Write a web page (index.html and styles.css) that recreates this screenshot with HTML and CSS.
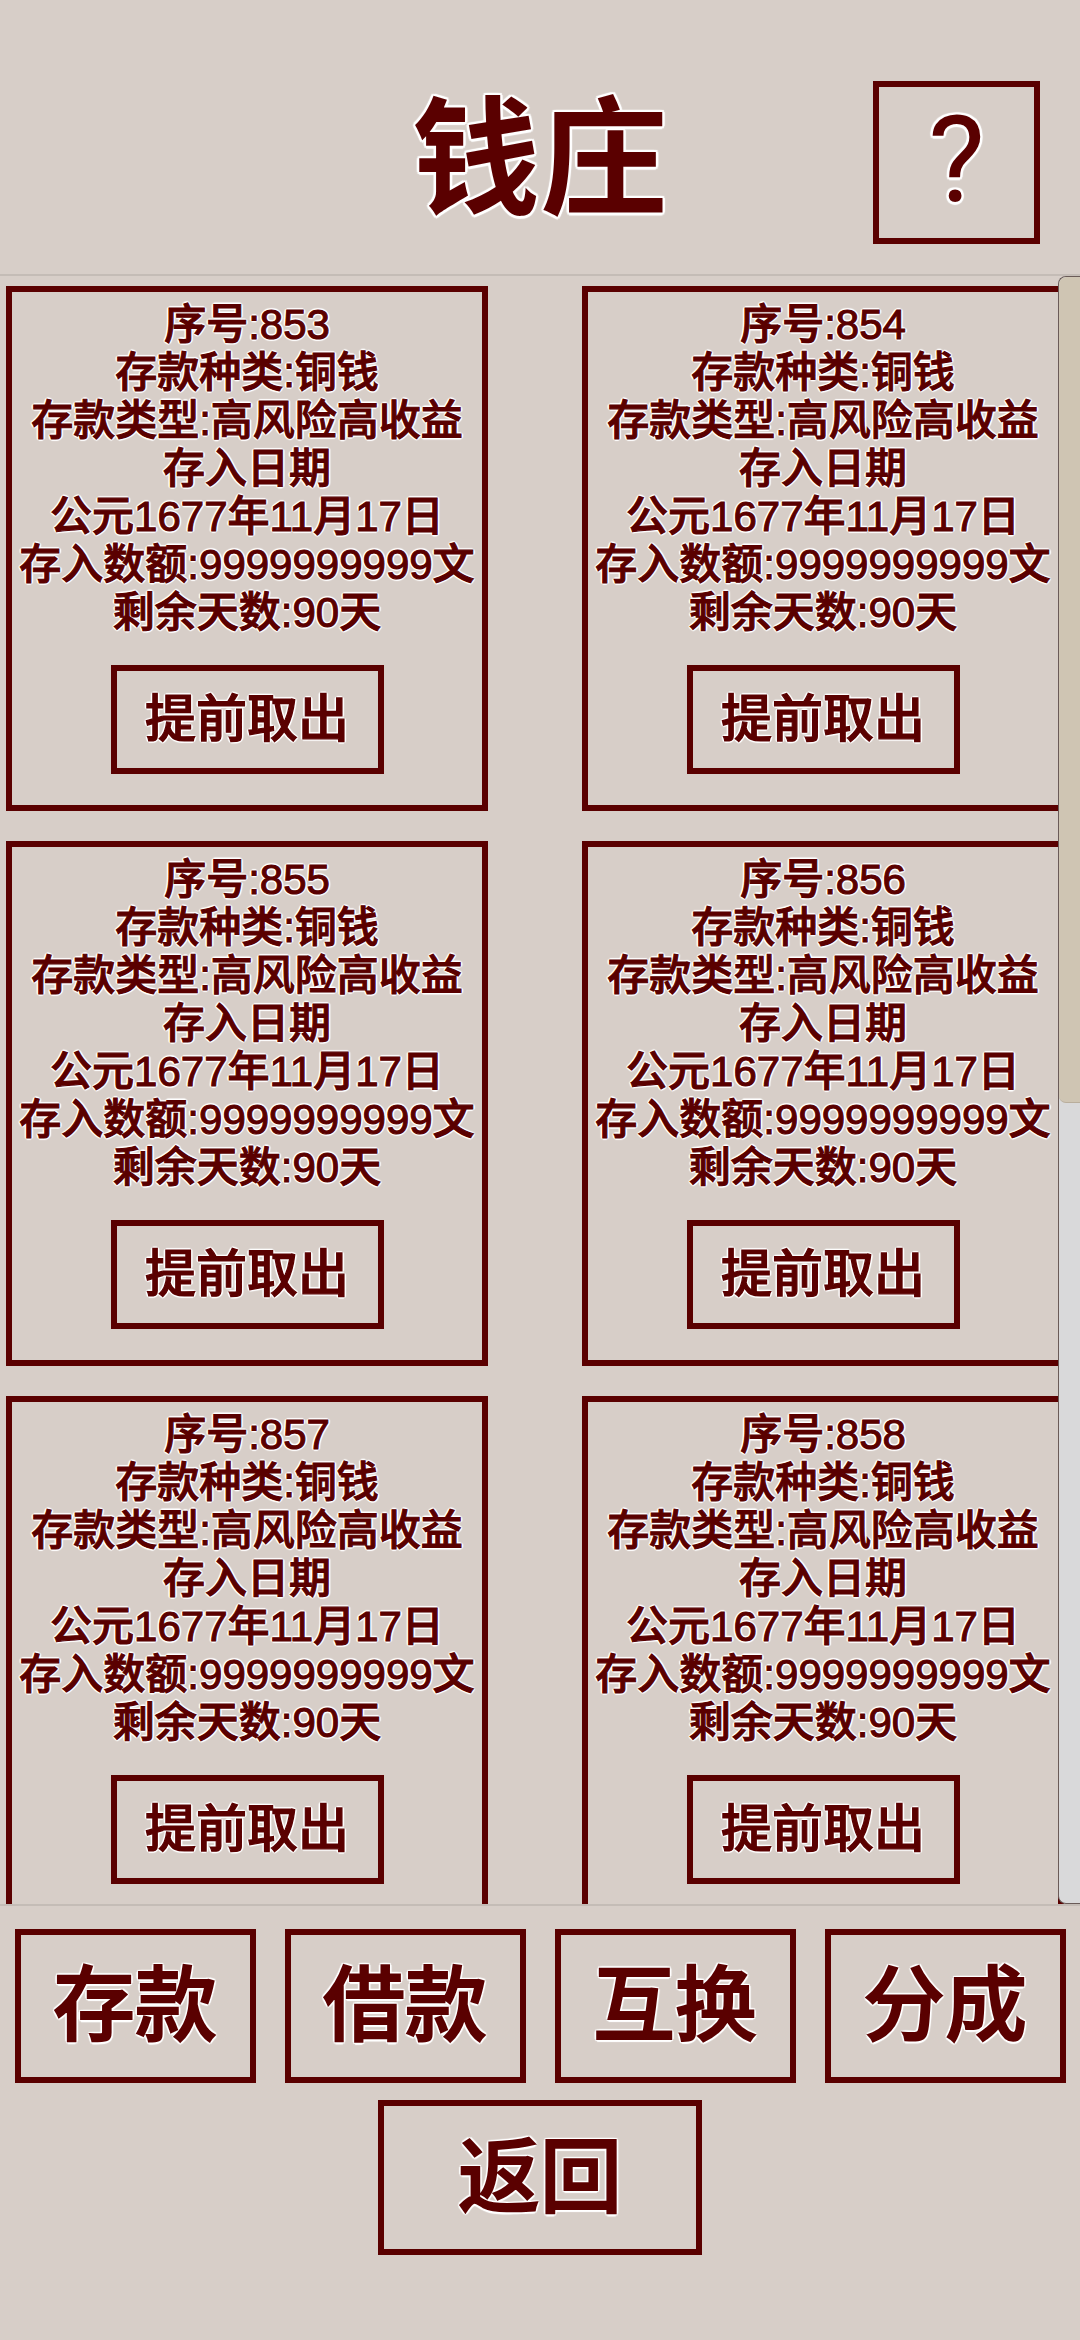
FILE: index.html
```html
<!DOCTYPE html>
<html lang="zh-CN">
<head>
<meta charset="utf-8">
<title>钱庄</title>
<link rel="stylesheet" href="styles.css">
</head>
<body>
<div class="app">
  <header class="top">
    <div class="top-side"></div>
    <h1 class="title">钱庄</h1>
    <div class="top-side top-right">
      <button class="help">?</button>
    </div>
  </header>

  <section class="list">
    <div class="grid">
      <div class="card">
        <div class="line">序号:853</div>
        <div class="line">存款种类:铜钱</div>
        <div class="line">存款类型:高风险高收益</div>
        <div class="line">存入日期</div>
        <div class="line">公元1677年11月17日</div>
        <div class="line">存入数额:9999999999文</div>
        <div class="line">剩余天数:90天</div>
        <button class="card-btn">提前取出</button>
      </div>
      <div class="card">
        <div class="line">序号:854</div>
        <div class="line">存款种类:铜钱</div>
        <div class="line">存款类型:高风险高收益</div>
        <div class="line">存入日期</div>
        <div class="line">公元1677年11月17日</div>
        <div class="line">存入数额:9999999999文</div>
        <div class="line">剩余天数:90天</div>
        <button class="card-btn">提前取出</button>
      </div>
      <div class="card">
        <div class="line">序号:855</div>
        <div class="line">存款种类:铜钱</div>
        <div class="line">存款类型:高风险高收益</div>
        <div class="line">存入日期</div>
        <div class="line">公元1677年11月17日</div>
        <div class="line">存入数额:9999999999文</div>
        <div class="line">剩余天数:90天</div>
        <button class="card-btn">提前取出</button>
      </div>
      <div class="card">
        <div class="line">序号:856</div>
        <div class="line">存款种类:铜钱</div>
        <div class="line">存款类型:高风险高收益</div>
        <div class="line">存入日期</div>
        <div class="line">公元1677年11月17日</div>
        <div class="line">存入数额:9999999999文</div>
        <div class="line">剩余天数:90天</div>
        <button class="card-btn">提前取出</button>
      </div>
      <div class="card">
        <div class="line">序号:857</div>
        <div class="line">存款种类:铜钱</div>
        <div class="line">存款类型:高风险高收益</div>
        <div class="line">存入日期</div>
        <div class="line">公元1677年11月17日</div>
        <div class="line">存入数额:9999999999文</div>
        <div class="line">剩余天数:90天</div>
        <button class="card-btn">提前取出</button>
      </div>
      <div class="card">
        <div class="line">序号:858</div>
        <div class="line">存款种类:铜钱</div>
        <div class="line">存款类型:高风险高收益</div>
        <div class="line">存入日期</div>
        <div class="line">公元1677年11月17日</div>
        <div class="line">存入数额:9999999999文</div>
        <div class="line">剩余天数:90天</div>
        <button class="card-btn">提前取出</button>
      </div>
    </div>
    <div class="scrollbar"><div class="thumb"></div></div>
  </section>

  <nav class="actions">
    <div class="action-row">
      <div class="cell"><button class="big-btn">存款</button></div>
      <div class="cell"><button class="big-btn">借款</button></div>
      <div class="cell"><button class="big-btn">互换</button></div>
      <div class="cell"><button class="big-btn">分成</button></div>
    </div>
    <div class="back-row">
      <button class="big-btn back-btn">返回</button>
    </div>
  </nav>
</div>
</body>
</html>
```

FILE: styles.css
```css
:root {
  --bg: #d7cec8;
  --ink: #5a0000;
  --halo: 2px 0 1px #fff, -2px 0 1px #fff, 0 2px 1px #fff, 0 -2px 1px #fff,
          1.4px 1.4px 1px #fff, -1.4px -1.4px 1px #fff, 1.4px -1.4px 1px #fff, -1.4px 1.4px 1px #fff;
  --halo-big: 2.5px 0 1px #fff, -2.5px 0 1px #fff, 0 2.5px 1px #fff, 0 -2.5px 1px #fff,
          1.8px 1.8px 1px #fff, -1.8px -1.8px 1px #fff, 1.8px -1.8px 1px #fff, -1.8px 1.8px 1px #fff;
}

* { box-sizing: border-box; }

html, body {
  margin: 0;
  padding: 0;
  background: var(--bg);
}

body {
  width: 1080px;
  height: 2340px;
  overflow: hidden;
  font-family: "Liberation Sans", "Noto Sans CJK SC", sans-serif;
  color: var(--ink);
}

button {
  font: inherit;
  color: inherit;
  background: transparent;
  padding: 0;
  margin: 0;
  cursor: pointer;
}

/* ---------- header ---------- */
.top {
  height: 274px;
  padding-top: 81px;
  display: grid;
  grid-template-columns: 1fr auto 1fr;
  align-items: start;
}

.title {
  margin: 5px 0 0;
  font-family: "Noto Sans CJK SC", sans-serif;
  font-size: 128px;
  line-height: 128px;
  font-weight: 700;
  text-shadow: var(--halo-big);
}

.top-right {
  display: flex;
  justify-content: flex-end;
  padding-right: 40px;
}

.help {
  width: 167px;
  height: 163px;
  border: 6px solid var(--ink);
  display: flex;
  align-items: center;
  justify-content: center;
  padding-bottom: 6px;
  font-family: Roboto, "Liberation Sans", sans-serif;
  font-weight: 400;
  font-size: 120px;
  line-height: 1;
  text-shadow: var(--halo-big);
}

/* ---------- list ---------- */
.list {
  position: relative;
  height: 1632px;
  border-top: 2px solid #c4bcb6;
  border-bottom: 2px solid #c4bcb6;
  overflow: hidden;
}

.grid {
  display: grid;
  grid-template-columns: 482px 482px;
  column-gap: 94px;
  row-gap: 30px;
  padding: 10px 0 0 6px;
}

.card {
  height: 525px;
  border: 6px solid var(--ink);
  padding-top: 9px;
  display: flex;
  flex-direction: column;
  align-items: center;
  text-align: center;
}

.line {
  font-size: 42px;
  line-height: 48px;
  font-weight: 500;
  white-space: nowrap;
  -webkit-text-stroke: 1.1px var(--ink);
  text-shadow: var(--halo);
}

.card-btn {
  margin-top: 28px;
  width: 273px;
  height: 109px;
  border: 6px solid var(--ink);
  display: flex;
  align-items: center;
  justify-content: center;
  font-size: 51px;
  font-weight: 500;
  line-height: 1;
  -webkit-text-stroke: 1.2px var(--ink);
  text-shadow: var(--halo);
}

/* overlay scrollbar */
.scrollbar {
  position: absolute;
  top: 0;
  right: 0;
  bottom: 0;
  width: 22px;
  background: #d9d9da;
  border: 1.5px solid #6a5b58;
  border-right: none;
  border-radius: 8px 0 0 8px;
  overflow: hidden;
}

.thumb {
  height: 826px;
  background: #cfc5b3;
  border-radius: 7px 0 0 7px;
  border-bottom: 1px solid #b9ae9c;
}

/* ---------- bottom actions ---------- */
.actions {
  padding-top: 23px;
}

.action-row {
  display: grid;
  grid-template-columns: repeat(4, 1fr);
  justify-items: center;
}

.big-btn {
  width: 241px;
  height: 154px;
  border: 6px solid var(--ink);
  display: flex;
  align-items: center;
  justify-content: center;
  font-size: 82px;
  font-weight: 500;
  line-height: 1;
  -webkit-text-stroke: 1.8px var(--ink);
  text-shadow: var(--halo-big);
}

.back-row {
  display: flex;
  justify-content: center;
  margin-top: 17px;
}

.back-btn {
  width: 324px;
  height: 155px;
}
```
